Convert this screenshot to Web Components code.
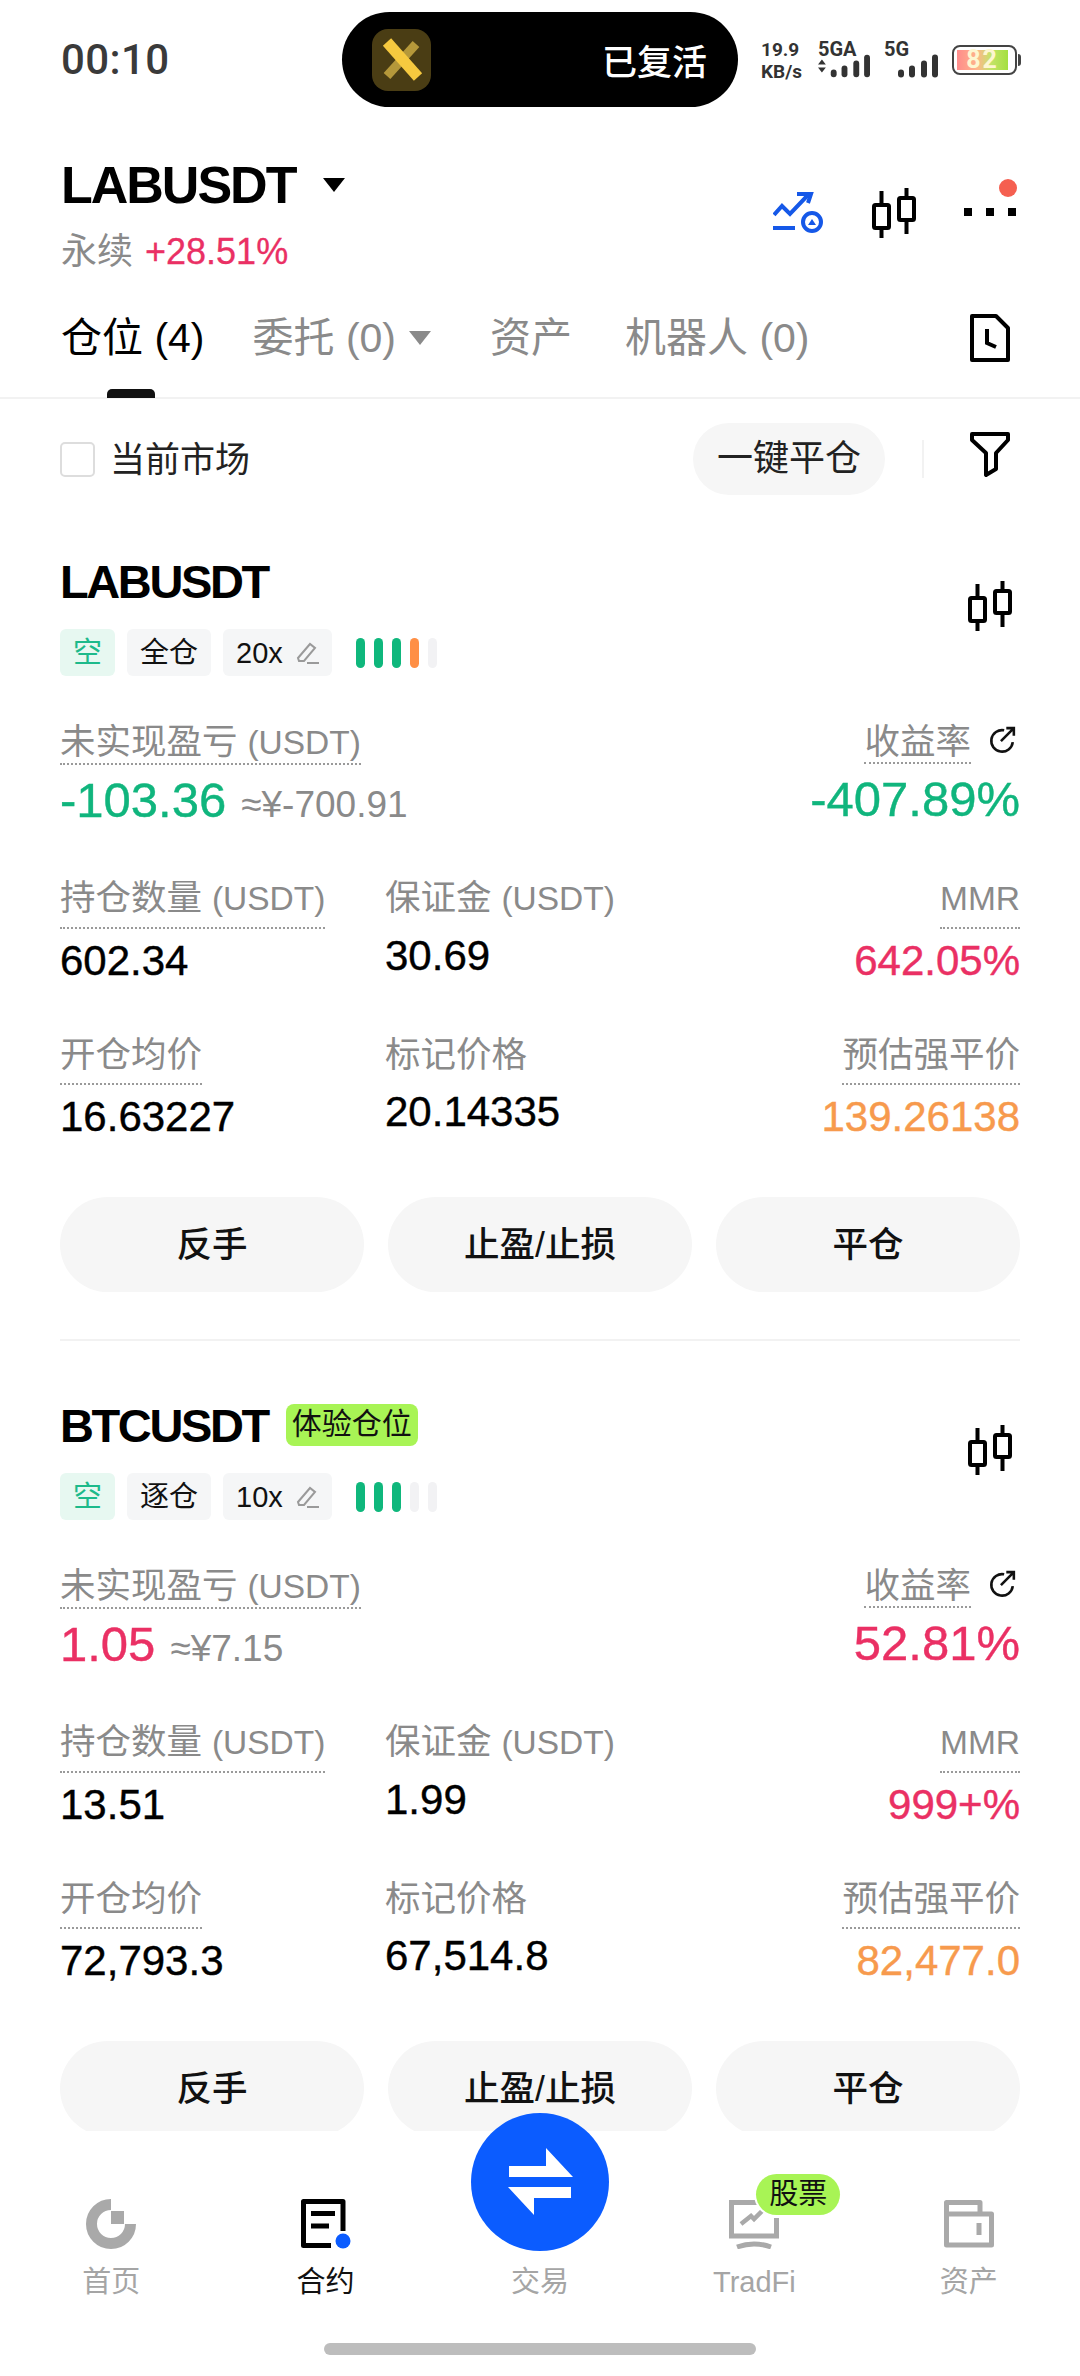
<!DOCTYPE html>
<html lang="zh">
<head>
<meta charset="utf-8">
<title>LABUSDT</title>
<style>
  html, body { margin: 0; background: #fff; }
  body { font-family: "Liberation Sans", "Noto Sans CJK SC", sans-serif; color: #000; }
  app-shell { width: 1080px; height: 2376px; }
</style>
</head>
<body>
<app-shell>
  <status-bar></status-bar>
  <market-header></market-header>
  <position-tabs></position-tabs>
  <filter-row></filter-row>
  <div slot="list">
    <position-card symbol="LABUSDT" margin-type="全仓" leverage="20x" risk="4"
      pnl="-103.36" pnl-cny="≈¥-700.91" pnl-tone="green" roe="-407.89%"
      size="602.34" margin="30.69" mmr="642.05%"
      entry="16.63227" mark="20.14335" liq="139.26138"></position-card>
    <position-card symbol="BTCUSDT" badge="体验仓位" margin-type="逐仓" leverage="10x" risk="3"
      pnl="1.05" pnl-cny="≈¥7.15" pnl-tone="red" roe="52.81%"
      size="13.51" margin="1.99" mmr="999+%"
      entry="72,793.3" mark="67,514.8" liq="82,477.0"></position-card>
  </div>
  <bottom-nav slot="nav"></bottom-nav>
</app-shell>

<script>
const candleIcon = `
  <svg width="44" height="50" viewBox="0 0 44 50" fill="none" stroke="#000" stroke-width="4">
    <rect x="2" y="17" width="15" height="23" rx="1.5"/>
    <path d="M9.5 3v14M9.5 40v10"/>
    <rect x="27" y="10" width="15" height="22" rx="1.5"/>
    <path d="M34.5 0v10M34.5 32v14"/>
  </svg>`;

class AppShell extends HTMLElement {
  connectedCallback() {
    this.attachShadow({ mode: 'open' });
    this.shadowRoot.innerHTML = `
      <style>
        :host { display: flex; flex-direction: column; overflow: hidden; }
        .list { flex: 1; min-height: 0; overflow: hidden; }
      </style>
      <slot></slot>
      <div class="list"><slot name="list"></slot></div>
      <slot name="nav"></slot>
    `;
  }
}

class StatusBar extends HTMLElement {
  connectedCallback() {
    this.attachShadow({ mode: 'open' });
    const bars = `
      <rect x="0" y="15" width="6" height="8" rx="3"/>
      <rect x="11" y="11" width="6" height="12" rx="3"/>
      <rect x="23" y="6" width="6" height="17" rx="3"/>
      <rect x="34" y="0" width="6" height="23" rx="3"/>`;
    this.shadowRoot.innerHTML = `
      <style>
        :host { display: flex; height: 130px; padding: 12px 63px 0 61px; box-sizing: border-box; align-items: flex-start; color: #333; font-family: Roboto, "Noto Sans CJK SC", sans-serif; }
        .time { width: 281px; margin-top: 24px; font-size: 42px; line-height: 48px; font-weight: 500; letter-spacing: .4px; color: #3a3a3a; }
        .pill { width: 396px; height: 95px; border-radius: 48px; background: #000; display: flex; align-items: center; justify-content: space-between; padding: 0 31px 0 30px; box-sizing: border-box; }
        .app { width: 59px; height: 62px; border-radius: 16px; background: #4a3d14; }
        .app svg { display: block; }
        .live { color: #fff; font-size: 35px; font-weight: 500; font-family: "Noto Sans CJK SC", sans-serif; }
        .net { margin: 27px 0 0 23px; width: 44px; font-size: 19px; line-height: 22px; font-weight: 700; white-space: nowrap; }
        .sim { margin: 27px 0 0 13px; width: 54px; font-size: 20px; line-height: 20px; font-weight: 700; }
        .sim svg { display: block; fill: #333; margin-top: -5px; }
        .sim2 { margin-left: 12px; width: 54px; }
        .sim2 svg { margin-left: 14px; }
        .battery { margin: 33px 0 0 14px; width: 65px; height: 30px; box-sizing: border-box; border: 2px solid #444; border-radius: 8px; padding: 3px; position: relative; display: flex; }
        .battery::after { content: ''; position: absolute; right: -6px; top: 7px; width: 3px; height: 12px; background: #444; border-radius: 0 3px 3px 0; }
        .level { flex: 1; background: linear-gradient(90deg, #ff8c8c 0%, #ffb58a 40%, #c5e36a 65%, #a4e040 100%); color: #fdf6d0; font-size: 25px; font-weight: 700; line-height: 20px; text-align: center; letter-spacing: 2px; margin-right: 4px; }
      </style>
      <div class="time">00:10</div>
      <div class="pill">
        <div class="app">
          <svg width="59" height="62" viewBox="0 0 59 62">
            <path d="M44 15L15 47" stroke="#b5983a" stroke-width="9"/>
            <path d="M15 13l31 35" stroke="#f6c93f" stroke-width="11"/>
          </svg>
        </div>
        <div class="live">已复活</div>
      </div>
      <div class="net">19.9<br>KB/s</div>
      <div class="sim">5GA
        <svg width="52" height="24" viewBox="-13 0 53 23">
          <path d="M-13 10l4-5 4 5zM-13 13l4 5 4-5z"/>${bars}
        </svg>
      </div>
      <div class="sim sim2">5G
        <svg width="40" height="24" viewBox="0 0 40 23">${bars}</svg>
      </div>
      <div class="battery"><div class="level">82</div></div>
    `;
  }
}

class MarketHeader extends HTMLElement {
  connectedCallback() {
    this.attachShadow({ mode: 'open' });
    this.shadowRoot.innerHTML = `
      <style>
        :host { display: flex; height: 160px; padding: 0 64px 0 61px; justify-content: space-between; }
        .name { display: flex; align-items: center; height: 70px; margin-top: 20px; font-size: 52px; line-height: 70px; font-weight: 700; letter-spacing: -2px; }
        .caret { margin-left: 28px; width: 0; height: 0; border-left: 11px solid transparent; border-right: 11px solid transparent; border-top: 14px solid #000; }
        .sub { margin-top: 6px; font-size: 36px; line-height: 52px; color: #8a8a8a; display: flex; gap: 12px; }
        .chg { color: #ea3064; -webkit-text-stroke: .3px #ea3064; }
        .tools { display: flex; align-items: flex-start; padding-top: 58px; }
        .dots { margin-left: 48px; width: 52px; height: 50px; position: relative; }
        .dots i { position: absolute; top: 20px; width: 8px; height: 8px; background: #000; }
        .dots b { position: absolute; top: -9px; right: -1px; width: 18px; height: 18px; border-radius: 50%; background: #f55f50; }
        .trade { margin-top: 4px; margin-right: 49px; }
      </style>
      <div>
        <div class="name">LABUSDT<span class="caret"></span></div>
        <div class="sub"><span>永续</span><span class="chg">+28.51%</span></div>
      </div>
      <div class="tools">
        <svg class="trade" width="50" height="42" viewBox="0 0 50 42" fill="none" stroke="#1558e8" stroke-width="4">
          <path d="M1 23l8-9 8 8L35 3"/>
          <path d="M24 2h14l-3 9"/>
          <path d="M0 36h22"/>
          <circle cx="39" cy="30" r="9"/>
          <path d="M35 33l4-6 4 6z" fill="#1558e8" stroke="none"/>
        </svg>
        ${candleIcon}
        <div class="dots"><i style="left:0"></i><i style="left:22px"></i><i style="left:44px"></i><b></b></div>
      </div>
    `;
  }
}

class PositionTabs extends HTMLElement {
  connectedCallback() {
    this.attachShadow({ mode: 'open' });
    this.shadowRoot.innerHTML = `
      <style>
        :host { display: flex; align-items: flex-start; height: 109px; box-sizing: border-box; padding: 24px 70px 0 61px; border-bottom: 2px solid #f2f2f2; gap: 48px; position: relative; font-size: 41px; line-height: 48px; color: #8a8a8a; white-space: nowrap; }
        .on { color: #000; position: relative; }
        .on::after { content: ''; position: absolute; left: 46px; top: 75px; width: 48px; height: 9px; background: #111; border-radius: 5px 5px 0 0; }
        .drop { display: flex; align-items: center; margin-right: 11px; }
        .drop::after { content: ''; margin-left: 13px; border-left: 11px solid transparent; border-right: 11px solid transparent; border-top: 14px solid #8a8a8a; }
        .bot { margin-left: 5px; }
        svg { margin-left: auto; }
      </style>
      <span class="on">仓位 (4)</span>
      <span class="drop">委托 (0)</span>
      <span>资产</span>
      <span class="bot">机器人 (0)</span>
      <svg width="40" height="48" viewBox="0 0 40 48" fill="none" stroke="#000" stroke-width="4">
        <path d="M2 2h24l12 12v32H2z" stroke-linejoin="round"/>
        <path d="M17 15v14l9 4"/>
      </svg>
    `;
  }
}

class FilterRow extends HTMLElement {
  connectedCallback() {
    this.attachShadow({ mode: 'open' });
    this.shadowRoot.innerHTML = `
      <style>
        :host { display: flex; align-items: center; height: 72px; padding: 24px 70px 45px 60px; font-size: 35px; color: #222; }
        .check { width: 35px; height: 35px; box-sizing: border-box; border: 2px solid #ddd; border-radius: 5px; margin-right: 15px; }
        .text { margin-top: -5px; }
        button { all: unset; margin-left: auto; width: 192px; height: 72px; border-radius: 36px; background: #f6f6f6; text-align: center; line-height: 70px; font-size: 36px; }
        .rule { width: 2px; height: 38px; background: #f2f2f2; margin: 0 46px 0 37px; }
        svg { margin-top: -10px; }
      </style>
      <div class="check"></div>
      <span class="text">当前市场</span>
      <button>一键平仓</button>
      <div class="rule"></div>
      <svg width="40" height="46" viewBox="0 0 40 46" fill="none" stroke="#000" stroke-width="4" stroke-linejoin="round">
        <path d="M2 3h36v6L26 22v16l-10 6V22L2 9z"/>
      </svg>
    `;
  }
}

class StatCell extends HTMLElement {
  connectedCallback() {
    this.attachShadow({ mode: 'open' });
    const dotted = this.hasAttribute('dotted');
    const label = this.getAttribute('label') || '';
    const unit = this.getAttribute('unit');
    this.shadowRoot.innerHTML = `
      <style>
        :host { display: flex; flex-direction: column; align-items: flex-start; }
        :host([right]) { align-items: flex-end; }
        .head { display: flex; align-items: flex-start; }
        .label { font-size: 35.5px; line-height: 38px; color: #8a8a8a; white-space: nowrap; }
        .unit { font-size: 33.5px; }
        .dotted { padding-bottom: 9px; border-bottom: 2px dotted #9a9a9a; }
        :host([big]) .dotted { padding-bottom: 1px; }
        .value { margin-top: 6px; font-size: 42px; line-height: 52px; -webkit-text-stroke: .4px currentColor; white-space: nowrap; }
        .plain { margin-top: 12px; }
        :host([big]) .value { font-size: 49px; margin-top: 9px; }
        :host([tone=red]) .value { color: #ea3064; }
        :host([tone=green]) .value { color: #10b57d; }
        :host([tone=orange]) .value { color: #f79a4d; }
      </style>
      <div class="head">
        <div class="label ${dotted ? 'dotted' : ''}">${label}${unit ? `${label ? ' ' : ''}<span class="unit">${unit}</span>` : ''}</div>
        <slot name="aside"></slot>
      </div>
      <div class="value ${dotted ? '' : 'plain'}"><slot></slot></div>
    `;
  }
}

class PositionCard extends HTMLElement {
  connectedCallback() {
    this.attachShadow({ mode: 'open' });
    const a = n => this.getAttribute(n);
    const risk = Number(a('risk'));
    let bars = '';
    for (let i = 0; i < 5; i++) {
      const color = i >= risk ? '#f2f2f4' : i === 3 ? '#ff8f45' : '#0fb77c';
      bars += `<i style="background:${color}"></i>`;
    }
    this.shadowRoot.innerHTML = `
      <style>
        :host { display: block; padding: 0 60px 43px; }
        .head { display: flex; align-items: center; justify-content: space-between; height: 82px; padding-right: 8px; }
        .sym { display: flex; align-items: center; font-size: 47px; font-weight: 700; letter-spacing: -2.4px; }
        .badge { margin-left: 18px; height: 42px; line-height: 40px; padding: 0 6px; border-radius: 8px; background: #a8f455; color: #111; font-size: 30px; letter-spacing: 0; font-weight: 400; }
        .head svg { margin-top: 50px; }
        .chips { display: flex; align-items: center; gap: 12px; margin-top: 7px; }
        .chip { height: 47px; line-height: 46px; border-radius: 6px; background: #f5f6f7; padding: 0 13px; font-size: 29px; display: flex; align-items: center; color: #111; }
        .chip.short { background: #e7f8f1; color: #1dba8b; }
        .chip svg { margin-left: 13px; }
        .risk { display: flex; gap: 9px; margin-left: 12px; }
        .risk i { width: 9px; height: 30px; border-radius: 5px; }
        .top { display: flex; justify-content: space-between; margin-top: 47px; }
        .sub { font-size: 37px; line-height: 1; color: #8a8a8a; -webkit-text-stroke: 0; margin-left: 15px; }
        .share { display: block; margin: 3px 4px 0 17px; }
        .grid { display: grid; grid-template-columns: 325px 1fr auto; margin-top: 53px; row-gap: 49px; }
        .actions { display: grid; grid-template-columns: repeat(3, 304px); gap: 24px; margin-top: 54px; }
        .actions button { all: unset; height: 95px; border-radius: 48px; background: #f6f6f6; text-align: center; line-height: 92px; font-size: 35.5px; font-weight: 500; color: #111; }
        .rule { height: 2px; background: #f2f2f2; margin-top: 47px; }
      </style>
      <div class="head">
        <div class="sym">${a('symbol')}${a('badge') ? `<span class="badge">${a('badge')}</span>` : ''}</div>
        ${candleIcon}
      </div>
      <div class="chips">
        <span class="chip short">空</span>
        <span class="chip">${a('margin-type')}</span>
        <span class="chip">${a('leverage')}
          <svg width="23" height="23" viewBox="0 0 23 23" fill="none" stroke="#9a9a9a" stroke-width="2">
            <path d="M2 17L14 3l5 4L8 20H3z"/><path d="M11 22h12"/>
          </svg>
        </span>
        <span class="risk">${bars}</span>
      </div>
      <div class="top">
        <stat-cell big dotted label="未实现盈亏" unit="(USDT)" tone="${a('pnl-tone')}">${a('pnl')}<span class="sub">${a('pnl-cny')}</span></stat-cell>
        <stat-cell big dotted right label="收益率" tone="${a('pnl-tone')}">
          <svg slot="aside" class="share" width="28" height="28" viewBox="0 0 26 26" fill="none" stroke="#111" stroke-width="2.4">
            <path d="M23 15a10 10 0 1 1-8-11M12 14L24 2M17 2h7v7"/>
          </svg>
          ${a('roe')}
        </stat-cell>
      </div>
      <div class="grid">
        <stat-cell dotted label="持仓数量" unit="(USDT)">${a('size')}</stat-cell>
        <stat-cell label="保证金" unit="(USDT)">${a('margin')}</stat-cell>
        <stat-cell dotted right unit="MMR" tone="red">${a('mmr')}</stat-cell>
        <stat-cell dotted label="开仓均价">${a('entry')}</stat-cell>
        <stat-cell label="标记价格">${a('mark')}</stat-cell>
        <stat-cell dotted right label="预估强平价" tone="orange">${a('liq')}</stat-cell>
      </div>
      <div class="actions">
        <button>反手</button>
        <button>止盈/止损</button>
        <button>平仓</button>
      </div>
      <div class="rule"></div>
    `;
  }
}

class BottomNav extends HTMLElement {
  connectedCallback() {
    this.attachShadow({ mode: 'open' });
    this.shadowRoot.innerHTML = `
      <style>
        :host { display: block; flex: none; height: 245px; background: #fff; position: relative; }
        .items { display: grid; grid-template-columns: repeat(5, 1fr); padding: 68px 4px 0; }
        .item { display: flex; flex-direction: column; align-items: center; font-size: 29px; line-height: 40px; color: #a5a5a5; position: relative; }
        .item.on { color: #111; }
        .item svg { display: block; }
        .item span { margin-top: 13px; }
        .swap { width: 138px; height: 138px; margin: -86px 0 -2px; border-radius: 50%; background: #0b5cff; }
        .pill { position: absolute; top: -25px; left: 109px; width: 84px; height: 41px; border-radius: 21px; background: #a8f455; color: #111; font-size: 29px; line-height: 40px; text-align: center; box-shadow: 0 0 0 2px #fff; }
        .home { width: 432px; height: 12px; margin: 41px auto 0; background: #bdbdbd; border-radius: 6px; }
      </style>
      <div class="items">
        <div class="item">
          <svg width="50" height="50" viewBox="0 0 50 50" fill="none" stroke="#a9a9a9" stroke-width="11">
            <path d="M25 5.5A19.5 19.5 0 1 0 44.5 25"/>
            <rect x="25" y="12" width="13" height="13" fill="#a9a9a9" stroke="none"/>
          </svg>
          <span>首页</span>
        </div>
        <div class="item on">
          <svg width="50" height="50" viewBox="0 0 50 50" fill="none">
            <path d="M30 46.5H2.5V2.5H42V32" stroke="#000" stroke-width="5" stroke-linejoin="round"/>
            <path d="M10 14.5h24M10 27h18" stroke="#000" stroke-width="5"/>
            <circle cx="42" cy="42" r="7.5" fill="#0b5cff"/>
          </svg>
          <span>合约</span>
        </div>
        <div class="item">
          <svg class="swap" viewBox="0 0 138 138" fill="#fff">
            <path d="M38 53h37V35l27 29H38zM100 74H37l26 28V85h37z"/>
          </svg>
          <span>交易</span>
        </div>
        <div class="item">
          <svg width="50" height="50" viewBox="0 0 50 50" fill="none" stroke="#a9a9a9" stroke-width="5">
            <path d="M28 3.5H2.5V37h45V19"/>
            <path d="M12 25l10-8 3 3 10-10" stroke-width="4.5"/>
            <path d="M8 48c11-4 23-4 34 0"/>
          </svg>
          <div class="pill">股票</div>
          <span>TradFi</span>
        </div>
        <div class="item">
          <svg width="50" height="50" viewBox="0 0 50 50" fill="none" stroke="#a9a9a9" stroke-width="5" stroke-linejoin="round">
            <path d="M2.5 3.5H36V15H47.5V46H2.5zM2.5 15H36"/>
            <path d="M35 24v12"/>
          </svg>
          <span>资产</span>
        </div>
      </div>
      <div class="home"></div>
    `;
  }
}

customElements.define('stat-cell', StatCell);
customElements.define('app-shell', AppShell);
customElements.define('status-bar', StatusBar);
customElements.define('market-header', MarketHeader);
customElements.define('position-tabs', PositionTabs);
customElements.define('filter-row', FilterRow);
customElements.define('position-card', PositionCard);
customElements.define('bottom-nav', BottomNav);
</script>
</body>
</html>
